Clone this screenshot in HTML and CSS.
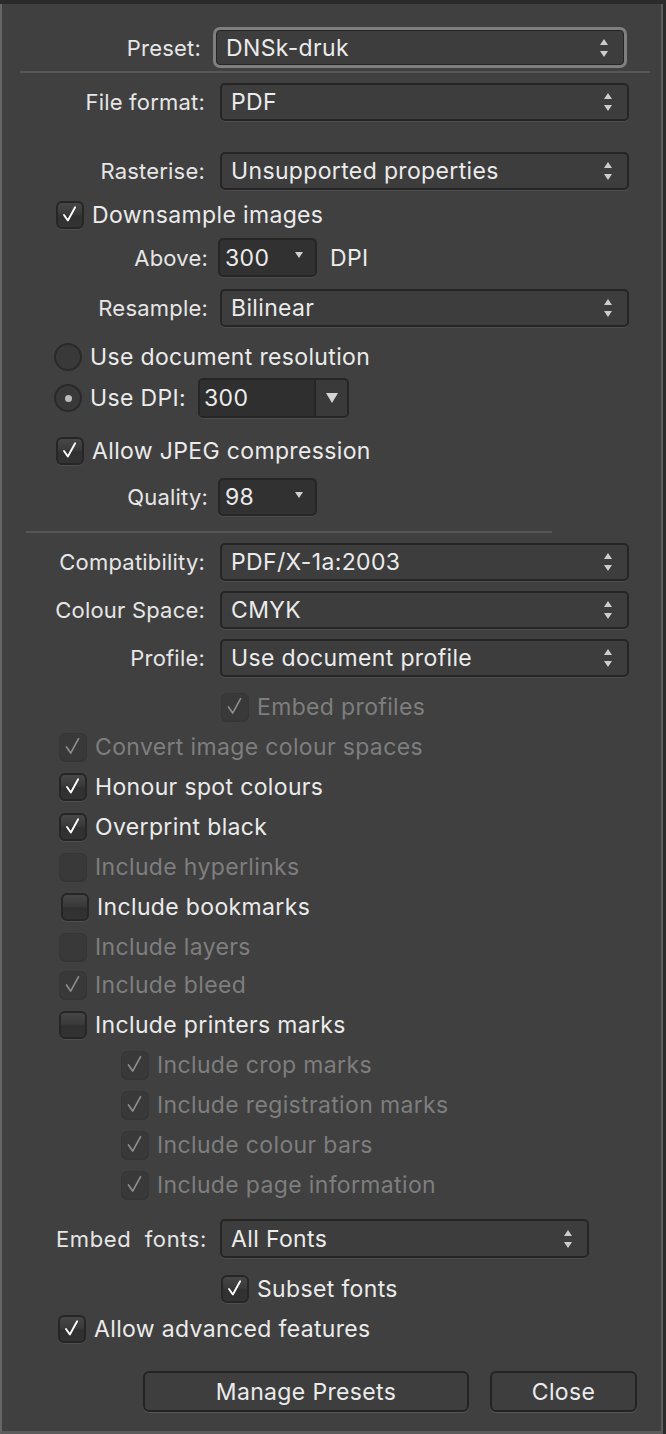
FILE: index.html
```html
<!DOCTYPE html>
<html lang="en">
<head>
    <meta charset="UTF-8"/>
    <meta name="viewport" content="width=device-width, initial-scale=1.0"/>
    <title>Export PDF</title>
    <link rel="stylesheet" href="styles.css">
</head>
<body>
<div class="panel">
    <!-- preset -->
    <div class="row preset-row">
        <span class="label preset-label">Preset:</span>
        <div class="ring">
            <div class="select inner">DNSk-druk
                <svg class="updown" width="8" height="18" viewBox="0 0 8 18"><path d="M0 6 L4 0 L8 6 Z M0 12 L4 18 L8 12 Z"/></svg>
            </div>
        </div>
    </div>
    <div class="rule rule-top"></div>

    <div class="row field format">
        <span class="label">File format:</span>
        <div class="select">PDF
            <svg class="updown" width="8" height="18" viewBox="0 0 8 18"><path d="M0 6 L4 0 L8 6 Z M0 12 L4 18 L8 12 Z"/></svg>
        </div>
    </div>
    <div class="row field rasterise">
        <span class="label">Rasterise:</span>
        <div class="select">Unsupported properties
            <svg class="updown" width="8" height="18" viewBox="0 0 8 18"><path d="M0 6 L4 0 L8 6 Z M0 12 L4 18 L8 12 Z"/></svg>
        </div>
    </div>
    <div class="row check downsample">
        <span class="box on"><svg viewBox="0 0 28 28"><path d="M7 14 L11.5 20.5 L20 5"/></svg></span>
        <span class="text">Downsample images</span>
    </div>
    <div class="row combo-row above">
        <span class="label short">Above:</span>
        <div class="combo">300
            <svg class="drop" width="8" height="6" viewBox="0 0 8 6"><path d="M0 0 L8 0 L4 6 Z"/></svg>
        </div>
        <span class="unit">DPI</span>
    </div>
    <div class="row field resample">
        <span class="label short">Resample:</span>
        <div class="select wide">Bilinear
            <svg class="updown" width="8" height="18" viewBox="0 0 8 18"><path d="M0 6 L4 0 L8 6 Z M0 12 L4 18 L8 12 Z"/></svg>
        </div>
    </div>
    <div class="row radio-row docres">
        <span class="radio"></span>
        <span class="text">Use document resolution</span>
    </div>
    <div class="row radio-row usedpi">
        <span class="radio on"></span>
        <span class="text">Use DPI:</span>
        <div class="split">
            <span class="split-field">300</span>
            <span class="split-btn"><svg width="12" height="10" viewBox="0 0 12 10"><path d="M0 0 L12 0 L6 10 Z"/></svg></span>
        </div>
    </div>
    <div class="row check jpeg">
        <span class="box on"><svg viewBox="0 0 28 28"><path d="M7 14 L11.5 20.5 L20 5"/></svg></span>
        <span class="text">Allow JPEG compression</span>
    </div>
    <div class="row combo-row quality">
        <span class="label short">Quality:</span>
        <div class="combo">98
            <svg class="drop" width="8" height="6" viewBox="0 0 8 6"><path d="M0 0 L8 0 L4 6 Z"/></svg>
        </div>
    </div>
    <div class="rule rule-mid"></div>

    <div class="row field compat">
        <span class="label">Compatibility:</span>
        <div class="select">PDF/X-1a:2003
            <svg class="updown" width="8" height="18" viewBox="0 0 8 18"><path d="M0 6 L4 0 L8 6 Z M0 12 L4 18 L8 12 Z"/></svg>
        </div>
    </div>
    <div class="row field gap10">
        <span class="label">Colour Space:</span>
        <div class="select">CMYK
            <svg class="updown" width="8" height="18" viewBox="0 0 8 18"><path d="M0 6 L4 0 L8 6 Z M0 12 L4 18 L8 12 Z"/></svg>
        </div>
    </div>
    <div class="row field gap10">
        <span class="label">Profile:</span>
        <div class="select">Use document profile
            <svg class="updown" width="8" height="18" viewBox="0 0 8 18"><path d="M0 6 L4 0 L8 6 Z M0 12 L4 18 L8 12 Z"/></svg>
        </div>
    </div>
    <div class="row check under-field embed-prof off">
        <span class="box on"><svg viewBox="0 0 28 28"><path d="M7 14 L11.5 20.5 L20 5"/></svg></span>
        <span class="text">Embed profiles</span>
    </div>

    <!-- option list -->
    <div class="checks">
        <div class="row check main off">
            <span class="box on"><svg viewBox="0 0 28 28"><path d="M7 14 L11.5 20.5 L20 5"/></svg></span>
            <span class="text">Convert image colour spaces</span>
        </div>
        <div class="row check main">
            <span class="box on"><svg viewBox="0 0 28 28"><path d="M7 14 L11.5 20.5 L20 5"/></svg></span>
            <span class="text">Honour spot colours</span>
        </div>
        <div class="row check main">
            <span class="box on"><svg viewBox="0 0 28 28"><path d="M7 14 L11.5 20.5 L20 5"/></svg></span>
            <span class="text">Overprint black</span>
        </div>
        <div class="row check main off">
            <span class="box"></span>
            <span class="text">Include hyperlinks</span>
        </div>
        <div class="row check main bookmarks">
            <span class="box"></span>
            <span class="text">Include bookmarks</span>
        </div>
        <div class="row check main off">
            <span class="box"></span>
            <span class="text">Include layers</span>
        </div>
        <div class="row check main off tight">
            <span class="box on"><svg viewBox="0 0 28 28"><path d="M7 14 L11.5 20.5 L20 5"/></svg></span>
            <span class="text">Include bleed</span>
        </div>
        <div class="row check main">
            <span class="box"></span>
            <span class="text">Include printers marks</span>
        </div>
        <div class="row check sub off">
            <span class="box on"><svg viewBox="0 0 28 28"><path d="M7 14 L11.5 20.5 L20 5"/></svg></span>
            <span class="text">Include crop marks</span>
        </div>
        <div class="row check sub off">
            <span class="box on"><svg viewBox="0 0 28 28"><path d="M7 14 L11.5 20.5 L20 5"/></svg></span>
            <span class="text">Include registration marks</span>
        </div>
        <div class="row check sub off">
            <span class="box on"><svg viewBox="0 0 28 28"><path d="M7 14 L11.5 20.5 L20 5"/></svg></span>
            <span class="text">Include colour bars</span>
        </div>
        <div class="row check sub off">
            <span class="box on"><svg viewBox="0 0 28 28"><path d="M7 14 L11.5 20.5 L20 5"/></svg></span>
            <span class="text">Include page information</span>
        </div>
    </div>

    <div class="row field fonts">
        <span class="label fonts-label">Embed&nbsp; fonts:</span>
        <div class="select short-select">All Fonts
            <svg class="updown" width="8" height="18" viewBox="0 0 8 18"><path d="M0 6 L4 0 L8 6 Z M0 12 L4 18 L8 12 Z"/></svg>
        </div>
    </div>
    <div class="row check under-field subset">
        <span class="box on"><svg viewBox="0 0 28 28"><path d="M7 14 L11.5 20.5 L20 5"/></svg></span>
        <span class="text">Subset fonts</span>
    </div>
    <div class="row check advanced">
        <span class="box on"><svg viewBox="0 0 28 28"><path d="M7 14 L11.5 20.5 L20 5"/></svg></span>
        <span class="text">Allow advanced features</span>
    </div>

    <div class="row buttons">
        <button class="btn manage">Manage Presets</button>
        <button class="btn close">Close</button>
    </div>
</div>
</body>
</html>
```

FILE: styles.css
```css
* {
    box-sizing: border-box;
}

body {
    margin: 0;
    background: #2b2b2b;
    font-family: Inter, "Noto Sans", "Liberation Sans", sans-serif;
    font-size: 23px;
    letter-spacing: 0.35px;
    color: #ebebeb;
}

.panel {
    width: 663px;
    height: 1430px;
    margin-top: 4px;
    padding-top: 23px;
    background: #404040;
    border-left: 2px solid #666;
    border-right: 2px solid #5e5e5e;
    border-bottom: 3px solid #5b5b5b;
}

.row {
    display: flex;
    align-items: center;
}

/* labels on the left, right aligned */
.label {
    width: 203px;
    margin-right: 15px;
    text-align: right;
    font-size: 22px;
    letter-spacing: 0.2px;
    color: #e6e6e6;
    white-space: nowrap;
}

.label.short {
    width: 206px;
    margin-right: 10px;
}

.preset-row {
    height: 41px;
}

.preset-label {
    width: 199px;
    margin-right: 12px;
}

.ring {
    width: 414px;
    height: 41px;
    padding: 3px;
    border-radius: 7px;
    background: #7f7f7f;
}

.select {
    width: 409px;
    height: 38px;
    padding: 0 15px 0 9px;
    display: flex;
    align-items: center;
    justify-content: space-between;
    background: #3d3d3d;
    border: 2px solid #252525;
    border-radius: 5px;
    box-shadow: 0 1px 0 #4d4d4d;
}

.select.inner {
    width: 100%;
    height: 100%;
    border-width: 1px;
    border-radius: 4px;
    box-shadow: none;
}

.select.wide {
    margin-left: 2px;
}

.short-select {
    width: 369px;
    height: 39px;
}

.updown path {
    fill: #cdcdcd;
}

.rule {
    height: 2px;
    background: #575757;
}

.rule-top {
    margin: 3px 0 0 18px;
    width: 630px;
}

.rule-mid {
    margin: 15px 0 0 24px;
    width: 526px;
}

.format {
    margin-top: 10px;
}

.rasterise {
    margin-top: 31px;
}

.gap10,
.compat {
    margin-top: 10px;
}

/* checkboxes */
.check {
    height: 28px;
}

.box {
    width: 28px;
    height: 28px;
    flex: none;
    border: 2px solid #262626;
    border-radius: 6px;
    background: linear-gradient(#474747, #3a3a3a 45%, #303030 55%, #333);
    box-shadow: 0 1px 0 #4e4e4e;
}

.box svg {
    display: block;
    width: 24px;
    height: 24px;
}

.box path {
    fill: none;
    stroke: #fff;
    stroke-width: 2.2;
    stroke-linecap: round;
    stroke-linejoin: round;
}

.check .text {
    margin-left: 8px;
}

.off .text {
    color: #7e7e7e;
}

.off .box {
    border: 1px solid #363636;
    background: #393939;
    box-shadow: 0 1px 0 #353535;
}

.off .box svg {
    width: 26px;
    height: 26px;
}

.off .box path {
    stroke: #8c8c8c;
    stroke-width: 1.8;
}

.downsample {
    margin-top: 11px;
    padding-left: 54px;
}

.jpeg {
    margin-top: 19px;
    padding-left: 54px;
}

.under-field {
    padding-left: 219px;
}

.embed-prof {
    margin-top: 16px;
}

.checks {
    margin-top: 12px;
    display: flex;
    flex-direction: column;
    gap: 12px;
}

.main {
    padding-left: 57px;
}

.bookmarks {
    padding-left: 59px;
}

.bookmarks .text {
    margin-left: 7px;
}

.main .text,
.sub .text {
    margin-left: 8px;
}

.tight {
    margin-top: -2px;
}

.sub {
    padding-left: 119px;
}

/* small combos */
.combo-row {
    height: 39px;
}

.above {
    margin-top: 9px;
}

.quality {
    margin-top: 13px;
    height: 38px;
}

.combo {
    width: 99px;
    height: 100%;
    padding: 0 12px 0 5px;
    display: flex;
    align-items: center;
    justify-content: space-between;
    background: #313131;
    border: 2px solid #262626;
    border-radius: 5px;
    box-shadow: 0 1px 0 #4d4d4d;
}

.drop {
    align-self: flex-start;
    margin-top: 12px;
}

.drop path {
    fill: #d0d0d0;
}

.unit {
    margin-left: 13px;
}

.resample {
    margin-top: 12px;
}

/* radios */
.radio-row {
    padding-left: 52px;
}

.docres {
    margin-top: 15px;
    height: 30px;
}

.usedpi {
    margin-top: 6px;
    height: 40px;
}

.radio {
    width: 28px;
    height: 28px;
    flex: none;
    border-radius: 50%;
    border: 2px solid #2a2a2a;
    background: #393939;
    display: flex;
    align-items: center;
    justify-content: center;
}

.radio.on::after {
    content: "";
    width: 7px;
    height: 7px;
    border-radius: 50%;
    background: #bcbcbc;
}

.radio-row .text {
    margin-left: 8px;
}

.split {
    margin-left: 12px;
    width: 151px;
    height: 40px;
    display: flex;
    border: 2px solid #262626;
    border-radius: 5px;
    overflow: hidden;
    box-shadow: 0 1px 0 #4d4d4d;
}

.split-field {
    width: 116px;
    padding-left: 4px;
    display: flex;
    align-items: center;
    background: #2f2f2f;
    border-right: 2px solid #262626;
}

.split-btn {
    flex: 1;
    display: flex;
    align-items: center;
    justify-content: center;
    background: #3a3a3a;
}

.split-btn path {
    fill: #d4d4d4;
}

/* bottom */
.fonts {
    margin-top: 20px;
    height: 39px;
}

.fonts-label {
    width: 205px;
    margin-right: 13px;
    letter-spacing: 0.6px;
}

.subset {
    margin-top: 17px;
}

.advanced {
    margin-top: 12px;
    padding-left: 56px;
}

.buttons {
    margin-top: 28px;
    padding-left: 141px;
    gap: 21px;
}

.btn {
    height: 41px;
    font-family: inherit;
    font-size: 23px;
    letter-spacing: 0.35px;
    color: #ebebeb;
    background: #3e3e3e;
    border: 2px solid #232323;
    border-radius: 6px;
    box-shadow: 0 1px 0 #565656;
}

.manage {
    width: 326px;
}

.close {
    width: 147px;
}
```
